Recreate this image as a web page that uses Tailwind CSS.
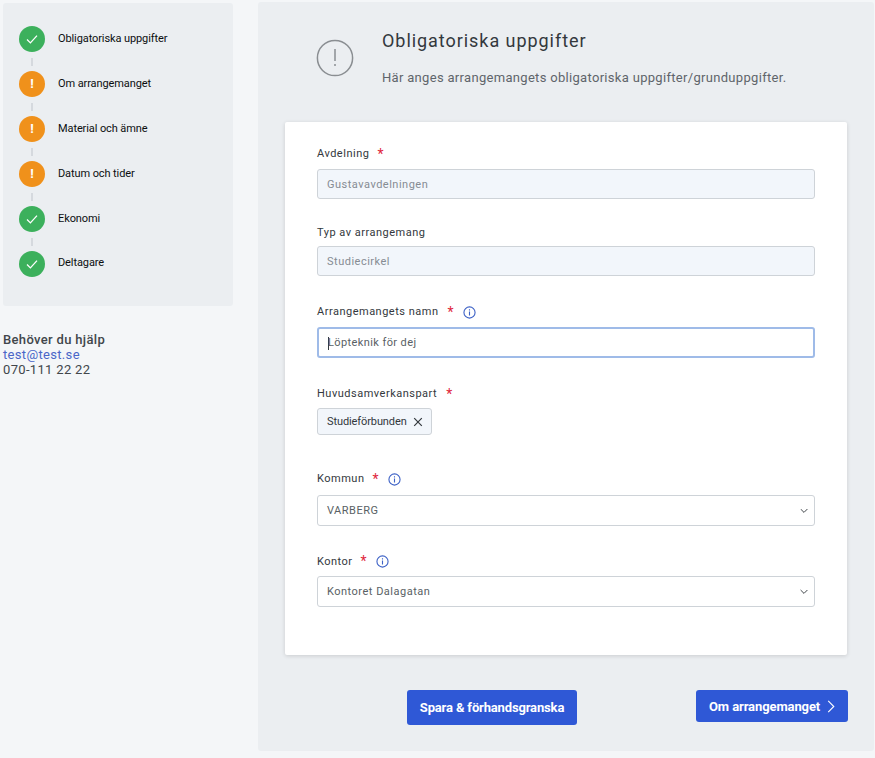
<!DOCTYPE html>
<html lang="sv">
  <head>
    <meta charset="UTF-8" />
    <meta name="viewport" content="width=device-width, initial-scale=1.0" />
    <title>Obligatoriska uppgifter</title>
    <script src="https://cdn.jsdelivr.net/npm/@tailwindcss/browser@4"></script>
  </head>
  <body class="bg-[#f4f6f8] font-[Roboto,sans-serif] h-[758px] w-[875px] overflow-hidden">
    <div class="flex items-start pt-[2px] pl-[3px]">
      <!-- sidebar -->
      <div class="w-[230px] shrink-0 pt-[1px]">
        <div class="bg-[#ebeef1] rounded-[3px] h-[303px] pt-[23px] pl-[16px] text-[11px] tracking-[-0.1px] text-[#0c0e10]">
          <div class="flex items-center h-[26px]">
            <span class="w-[26px] h-[26px] rounded-full bg-[#3cb05c] flex items-center justify-center">
              <svg viewBox="0 0 14 14" class="w-[14px] h-[14px]" fill="none" stroke="#fff" stroke-width="1.3"><path d="M2 7.5l3.4 3.4L12 3.6" /></svg>
            </span>
            <span class="ml-[13px] mt-[1px]">Obligatoriska uppgifter</span>
          </div>
          <div class="w-[2px] h-[8px] bg-[#d5d9de] ml-[12px] my-[5.5px]"></div>
          <div class="flex items-center h-[26px]">
            <span class="w-[26px] h-[26px] rounded-full bg-[#f0911b] flex items-center justify-center text-white font-bold text-[13px]">!</span>
            <span class="ml-[13px]">Om arrangemanget</span>
          </div>
          <div class="w-[2px] h-[8px] bg-[#d5d9de] ml-[12px] my-[5.5px]"></div>
          <div class="flex items-center h-[26px]">
            <span class="w-[26px] h-[26px] rounded-full bg-[#f0911b] flex items-center justify-center text-white font-bold text-[13px]">!</span>
            <span class="ml-[13px]">Material och ämne</span>
          </div>
          <div class="w-[2px] h-[8px] bg-[#d5d9de] ml-[12px] my-[5.5px]"></div>
          <div class="flex items-center h-[26px]">
            <span class="w-[26px] h-[26px] rounded-full bg-[#f0911b] flex items-center justify-center text-white font-bold text-[13px]">!</span>
            <span class="ml-[13px]">Datum och tider</span>
          </div>
          <div class="w-[2px] h-[8px] bg-[#d5d9de] ml-[12px] my-[5.5px]"></div>
          <div class="flex items-center h-[26px]">
            <span class="w-[26px] h-[26px] rounded-full bg-[#3cb05c] flex items-center justify-center">
              <svg viewBox="0 0 14 14" class="w-[14px] h-[14px]" fill="none" stroke="#fff" stroke-width="1.3"><path d="M2 7.5l3.4 3.4L12 3.6" /></svg>
            </span>
            <span class="ml-[13px]">Ekonomi</span>
          </div>
          <div class="w-[2px] h-[8px] bg-[#d5d9de] ml-[12px] my-[5.5px]"></div>
          <div class="flex items-center h-[26px]">
            <span class="w-[26px] h-[26px] rounded-full bg-[#3cb05c] flex items-center justify-center">
              <svg viewBox="0 0 14 14" class="w-[14px] h-[14px]" fill="none" stroke="#fff" stroke-width="1.3"><path d="M2 7.5l3.4 3.4L12 3.6" /></svg>
            </span>
            <span class="ml-[13px] -mt-[2px]">Deltagare</span>
          </div>
        </div>
        <div class="mt-[26px] text-[13px] leading-[15px] tracking-[0.33px] text-[#41464b]">
          <div class="font-medium">Behöver du hjälp</div>
          <div class="text-[#4a66c8]">test@test.se</div>
          <div>070-111 22 22</div>
        </div>
      </div>

      <!-- main -->
      <div class="ml-[25px] w-[616px] h-[749px] bg-[#ebeef1] rounded-[3px] pl-[27px] pr-[27px]">
        <div class="flex h-[120px]">
          <svg viewBox="0 0 38 38" class="w-[38px] h-[38px] ml-[31px] mt-[37px] shrink-0" fill="none" stroke="#8a8e92" stroke-width="1.5">
            <circle cx="19" cy="19" r="17.6" />
            <path d="M19 10v12M19 25v2" />
          </svg>
          <div class="ml-[28px]">
            <div class="mt-[27px] text-[18px] leading-[24px] tracking-[0.95px] text-[#33383d]">Obligatoriska uppgifter</div>
            <div class="mt-[15px] text-[13px] leading-[20px] tracking-[0.31px] text-[#5f656b]">Här anges arrangemangets obligatoriska uppgifter/grunduppgifter.</div>
          </div>
        </div>

        <div class="bg-white w-[562px] h-[533px] rounded-[2px] shadow-[0_1px_4px_rgba(0,0,0,0.14)] px-[32px] pt-[23px] text-[11px] tracking-[0.5px]">
          <div class="flex items-center h-[16px] pt-[2px] text-[#33383d]">Avdelning<span class="ml-[8px] text-[14px] text-[#e0263c]">*</span></div>
          <div class="mt-[8px] h-[30px] w-[498px] flex items-center px-[9px] pt-[2px] bg-[#f2f6fb] border border-[#ced3d8] rounded-[3px] text-[#868c93]">Gustavavdelningen</div>

          <div class="flex items-center h-[16px] pt-[2px] mt-[25px] text-[#33383d]">Typ av arrangemang</div>
          <div class="mt-[6px] h-[30px] w-[498px] flex items-center px-[9px] pt-[2px] bg-[#f2f6fb] border border-[#ced3d8] rounded-[3px] text-[#868c93]">Studiecirkel</div>

          <div class="flex items-center h-[16px] mt-[28px] text-[#33383d]">
            Arrangemangets namn<span class="ml-[9px] text-[14px] text-[#e0263c]">*</span>
            <svg viewBox="0 0 14 14" class="w-[13px] h-[13px] ml-[9px]" fill="none" stroke="#3e62c6" stroke-width="1.2"><circle cx="7" cy="7" r="6" /><path d="M7 6v4.2M7 3.6v1.2" /></svg>
          </div>
          <div class="mt-[7px] h-[31px] w-[498px] flex items-center px-[9px] pt-[2px] bg-white border-2 border-[#9fbbe8] rounded-[3px] text-[#595f65] tracking-[0.4px]"><span class="w-[1px] h-[13px] bg-[#33383d] -mr-[1px]"></span>Löpteknik för dej</div>

          <div class="flex items-center h-[16px] pt-[2px] mt-[27px] text-[#33383d]">Huvudsamverkanspart<span class="ml-[9px] text-[14px] text-[#e0263c]">*</span></div>
          <div class="mt-[7px] h-[27px] w-[115px] flex items-center pl-[9px] pr-[8px] bg-[#f2f6fb] border border-[#ced3d8] rounded-[3px] text-[#33383d] -tracking-[0.1px]">
            <span class="pt-[1px]">Studieförbunden</span>
            <svg viewBox="0 0 10 10" class="w-[10px] h-[10px] ml-auto" fill="none" stroke="#33383d" stroke-width="1.2"><path d="M1.2 1.2l7.6 7.6M8.8 1.2l-7.6 7.6" /></svg>
          </div>

          <div class="flex items-center h-[16px] mt-[36px] text-[#33383d]">
            Kommun<span class="ml-[8px] text-[14px] text-[#e0263c]">*</span>
            <svg viewBox="0 0 14 14" class="w-[13px] h-[13px] ml-[9px]" fill="none" stroke="#3e62c6" stroke-width="1.2"><circle cx="7" cy="7" r="6" /><path d="M7 6v4.2M7 3.6v1.2" /></svg>
          </div>
          <div class="mt-[8px] h-[31px] w-[498px] flex items-center justify-between pl-[9px] pr-[6px] bg-white border border-[#ced3d8] rounded-[3px] text-[#595f65]">
            <span class="pt-[2px]">VARBERG</span>
            <svg viewBox="0 0 8 6" class="w-[8px] h-[6px]" fill="none" stroke="#41464b" stroke-width="1"><path d="M.6 1l3.4 3.4L7.4 1" /></svg>
          </div>

          <div class="flex items-center h-[16px] mt-[27px] text-[#33383d]">
            <span class="pt-[2px]">Kontor</span><span class="ml-[8px] text-[14px] text-[#e0263c]">*</span>
            <svg viewBox="0 0 14 14" class="w-[13px] h-[13px] ml-[9px]" fill="none" stroke="#3e62c6" stroke-width="1.2"><circle cx="7" cy="7" r="6" /><path d="M7 6v4.2M7 3.6v1.2" /></svg>
          </div>
          <div class="mt-[7px] h-[31px] w-[498px] flex items-center justify-between pl-[9px] pr-[6px] bg-white border border-[#ced3d8] rounded-[3px] text-[#595f65]">
            <span class="pt-[2px]">Kontoret Dalagatan</span>
            <svg viewBox="0 0 8 6" class="w-[8px] h-[6px]" fill="none" stroke="#41464b" stroke-width="1"><path d="M.6 1l3.4 3.4L7.4 1" /></svg>
          </div>
        </div>

        <div class="flex mt-[35px] w-[563px]">
          <div class="ml-[122px] w-[170px] h-[35px] bg-[#2f58d6] rounded-[3px] text-white text-[13px] font-bold -tracking-[0.15px] flex items-center justify-center">Spara &amp; förhandsgranska</div>
          <div class="ml-auto w-[152px] h-[32px] bg-[#2f58d6] rounded-[3px] text-white text-[13px] font-bold -tracking-[0.1px] flex items-center pl-[13px]">
            <span class="pt-[2px]">Om arrangemanget</span>
            <svg viewBox="0 0 8 14" class="w-[8px] h-[13px] ml-[7px]" fill="none" stroke="#fff" stroke-width="1.2"><path d="M1 1l6 6-6 6" /></svg>
          </div>
        </div>
      </div>
    </div>
  </body>
</html>
